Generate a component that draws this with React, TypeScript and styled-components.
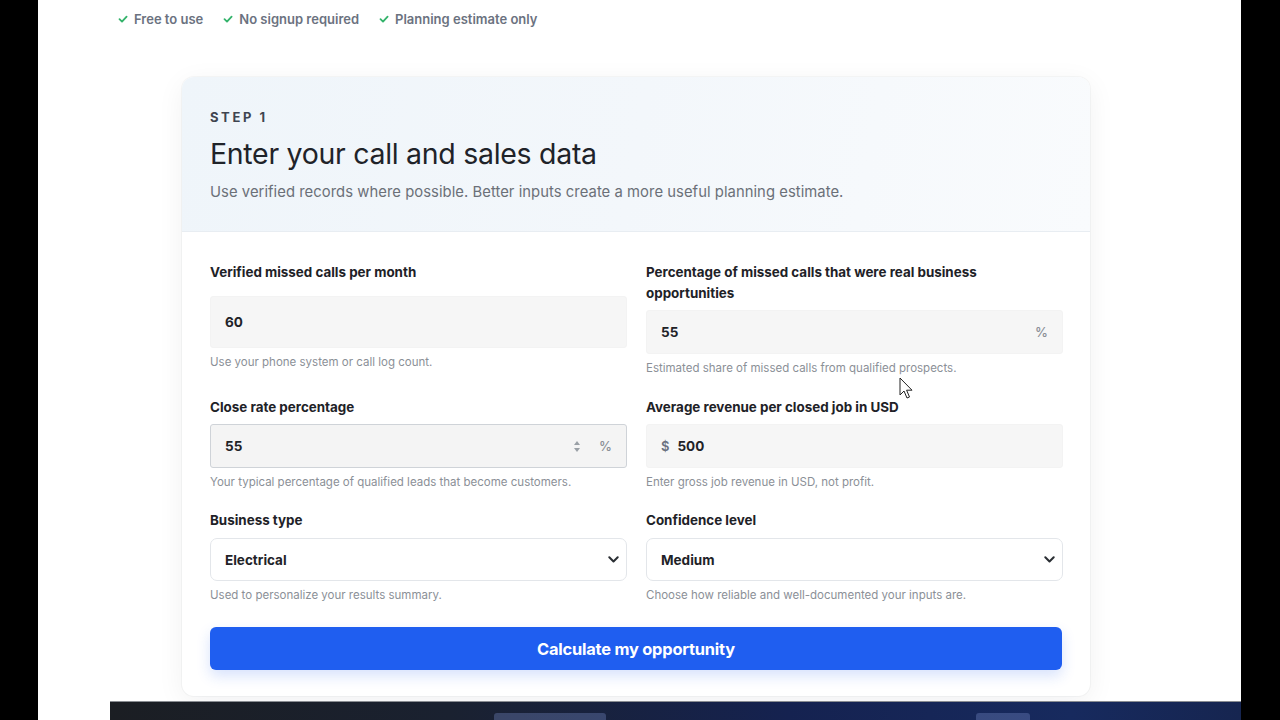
import React from "react";
import styled, { createGlobalStyle } from "styled-components";

const Global = createGlobalStyle`
  html, body { margin: 0; padding: 0; background: #000; }
  body { font-family: Inter, "Noto Sans", "Liberation Sans", sans-serif; -webkit-font-smoothing: antialiased; }
  * { box-sizing: border-box; }
`;

const Screen = styled.div`
  width: 1280px;
  height: 720px;
  display: flex;
  background: #000;
  overflow: hidden;
  position: relative;
`;

const SideBar = styled.div<{ $w: number }>`
  width: ${(p) => p.$w}px;
  flex: none;
  background: #000;
`;

const Viewport = styled.div`
  flex: 1;
  display: flex;
  flex-direction: column;
  background: #fff;
  min-width: 0;
`;

const Page = styled.div`
  flex: 1;
  overflow: hidden;
  padding: 10px 0 0 80px;
  display: flex;
  flex-direction: column;
`;

const Checks = styled.div`
  display: flex;
  gap: 20px;
  height: 18px;
  align-items: center;
`;

const CheckItem = styled.div`
  display: flex;
  align-items: center;
  gap: 6px;
  font-size: 13px;
  font-weight: 600;
  color: #6b7280;
  letter-spacing: 0;
`;

const Card = styled.div`
  margin: 49px 0 0 64px;
  width: 908px;
  border-radius: 12px;
  background: #fff;
  box-shadow: 0 6px 28px rgba(15, 23, 42, 0.06), 0 0 0 1px rgba(15, 23, 42, 0.03);
  overflow: hidden;
`;

const Header = styled.div`
  padding: 32px 28px 29px;
  background: linear-gradient(100deg, #eff5fa 0%, #f3f7fb 50%, #f9fbfd 100%);
  border-bottom: 1px solid #e8edf2;
`;

const Step = styled.div`
  font-size: 13px;
  font-weight: 700;
  letter-spacing: 0.2em;
  color: #3f4550;
  line-height: 16px;
`;

const Title = styled.h1`
  margin: 11px 0 0;
  font-size: 28.5px;
  font-weight: 400;
  color: #1f2329;
  line-height: 36px;
  letter-spacing: -0.3px;
`;

const Subtitle = styled.p`
  margin: 10px 0 0;
  font-size: 14.8px;
  color: #6b7078;
  line-height: 20px;
  letter-spacing: 0.05px;
`;

const Body = styled.div`
  padding: 30px 28px 26px;
`;

const Grid = styled.div`
  display: grid;
  grid-template-columns: 417px 417px;
  column-gap: 19px;
  row-gap: 0;
  align-items: start;
`;

const Field = styled.div<{ $mb: number; $labelGap: number }>`
  display: flex;
  flex-direction: column;
  margin-bottom: ${(p) => p.$mb}px;
  & > label {
    margin-bottom: ${(p) => p.$labelGap}px;
  }
`;

const Label = styled.label`
  font-size: 13.4px;
  font-weight: 700;
  color: #1e2227;
  line-height: 21px;
  max-width: 380px;
`;

const InputBox = styled.div<{ $h: number; $variant: "soft" | "bordered" | "select" }>`
  height: ${(p) => p.$h}px;
  display: flex;
  align-items: center;
  padding: 0 ${(p) => (p.$variant === "select" ? 7 : 14)}px 0 14px;
  background: ${(p) => (p.$variant === "soft" ? "#f6f6f6" : p.$variant === "bordered" ? "#f4f4f4" : "#fff")};
  border: 1px solid
    ${(p) => (p.$variant === "soft" ? "#f3f3f3" : p.$variant === "bordered" ? "#cfd3d8" : "#e3e6ea")};
  border-radius: ${(p) => (p.$variant === "select" ? "7px" : "3px")};
`;

const Value = styled.span`
  flex: 1;
  font-size: 13.5px;
  font-weight: 700;
  color: #1f2328;
`;

const Prefix = styled.span`
  font-size: 13px;
  font-weight: 600;
  color: #6b7280;
  margin-right: 8px;
`;

const Suffix = styled.span`
  font-size: 13px;
  font-weight: 500;
  color: #8a8f96;
  margin-left: 19px;
`;

const Spinner = styled.div`
  display: flex;
  flex-direction: column;
  gap: 3px;
  align-items: center;
`;

const Help = styled.div`
  font-size: 11.5px;
  color: #8b9097;
  line-height: 14px;
  margin-top: 7px;
`;

const Button = styled.button`
  width: 100%;
  height: 43px;
  margin-top: 4px;
  border: none;
  border-radius: 6px;
  background: #1f5ef0;
  color: #fff;
  font-family: inherit;
  font-size: 16.4px;
  font-weight: 700;
  letter-spacing: -0.2px;
  box-shadow: 0 6px 14px rgba(31, 94, 240, 0.18);
`;

const TaskbarRow = styled.div`
  height: 19px;
  flex: none;
  padding-left: 72px;
  background: #fff;
  display: flex;
`;

const Taskbar = styled.div`
  flex: 1;
  border-top: 1px solid #8a8d92;
  background: linear-gradient(90deg, #1b1e23 0%, #1a2130 30%, #152250 60%, #172a5e 85%, #162550 100%);
  position: relative;
`;

const TaskItem = styled.div<{ $l: number; $w: number }>`
  position: absolute;
  left: ${(p) => p.$l}px;
  width: ${(p) => p.$w}px;
  bottom: 0;
  height: 7px;
  border-radius: 3px 3px 0 0;
  background: rgba(120, 140, 200, 0.35);
`;

const Cursor = styled.svg`
  position: absolute;
  left: 899px;
  top: 377px;
`;

const Check = () => (
  <svg width="10" height="10" viewBox="0 0 10 10">
    <path d="M1.5 5.2 L4 7.6 L8.6 2.6" stroke="#34b36b" strokeWidth="1.8" fill="none" strokeLinecap="round" strokeLinejoin="round" />
  </svg>
);

const Chevron = () => (
  <svg width="11" height="7" viewBox="0 0 11 7">
    <path d="M1.3 1.3 L5.5 5.5 L9.7 1.3" stroke="#2a2e33" strokeWidth="2" fill="none" strokeLinecap="round" strokeLinejoin="round" />
  </svg>
);

const Arrows = () => (
  <Spinner>
    <svg width="6" height="4" viewBox="0 0 6 4"><path d="M0 4 L3 0 L6 4Z" fill="#9aa0a6" /></svg>
    <svg width="6" height="4" viewBox="0 0 6 4"><path d="M0 0 L3 4 L6 0Z" fill="#9aa0a6" /></svg>
  </Spinner>
);

export default function App() {
  return (
    <Screen>
      <Global />
      <SideBar $w={38} />
      <Viewport>
        <Page>
          <Checks>
            <CheckItem><Check />Free to use</CheckItem>
            <CheckItem><Check />No signup required</CheckItem>
            <CheckItem><Check />Planning estimate only</CheckItem>
          </Checks>
          <Card>
            <Header>
              <Step>STEP 1</Step>
              <Title>Enter your call and sales data</Title>
              <Subtitle>Use verified records where possible. Better inputs create a more useful planning estimate.</Subtitle>
            </Header>
            <Body>
              <Grid>
                <Field $mb={0} $labelGap={13}>
                  <Label>Verified missed calls per month</Label>
                  <InputBox $h={52} $variant="soft">
                    <Value>60</Value>
                  </InputBox>
                  <Help>Use your phone system or call log count.</Help>
                </Field>
                <Field $mb={22} $labelGap={6}>
                  <Label>Percentage of missed calls that were real business opportunities</Label>
                  <InputBox $h={44} $variant="soft">
                    <Value>55</Value>
                    <Suffix>%</Suffix>
                  </InputBox>
                  <Help>Estimated share of missed calls from qualified prospects.</Help>
                </Field>
                <Field $mb={21} $labelGap={6}>
                  <Label>Close rate percentage</Label>
                  <InputBox $h={44} $variant="bordered">
                    <Value>55</Value>
                    <Arrows />
                    <Suffix>%</Suffix>
                  </InputBox>
                  <Help>Your typical percentage of qualified leads that become customers.</Help>
                </Field>
                <Field $mb={21} $labelGap={6}>
                  <Label>Average revenue per closed job in USD</Label>
                  <InputBox $h={44} $variant="soft">
                    <Prefix>$</Prefix>
                    <Value>500</Value>
                  </InputBox>
                  <Help>Enter gross job revenue in USD, not profit.</Help>
                </Field>
                <Field $mb={21} $labelGap={7}>
                  <Label>Business type</Label>
                  <InputBox $h={43} $variant="select">
                    <Value>Electrical</Value>
                    <Chevron />
                  </InputBox>
                  <Help>Used to personalize your results summary.</Help>
                </Field>
                <Field $mb={21} $labelGap={7}>
                  <Label>Confidence level</Label>
                  <InputBox $h={43} $variant="select">
                    <Value>Medium</Value>
                    <Chevron />
                  </InputBox>
                  <Help>Choose how reliable and well-documented your inputs are.</Help>
                </Field>
              </Grid>
              <Button>Calculate my opportunity</Button>
            </Body>
          </Card>
        </Page>
        <TaskbarRow>
          <Taskbar>
            <TaskItem $l={384} $w={112} />
            <TaskItem $l={866} $w={54} />
          </Taskbar>
        </TaskbarRow>
      </Viewport>
      <SideBar $w={39} />
      <Cursor width="16" height="24" viewBox="0 0 16 24">
        <path d="M1 1 L1 18 L5 14 L8 21 L10.5 20 L7.6 13.2 L13 13.2 Z" fill="#fff" stroke="#222" strokeWidth="1" strokeLinejoin="round" />
      </Cursor>
    </Screen>
  );
}
